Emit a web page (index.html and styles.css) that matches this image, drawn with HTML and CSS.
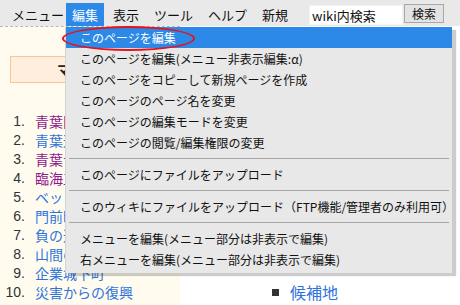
FILE: index.html
```html
<!DOCTYPE html>
<html lang="ja">
<head>
  <meta charset="UTF-8" />
  <title>編集メニュー</title>
  <link rel="stylesheet" href="styles.css">
</head>
<body>

<div class="menubar">
  <span class="menu-item first">メニュー</span>
  <span class="menu-item active">編集</span>
  <span class="menu-item">表示</span>
  <span class="menu-item">ツール</span>
  <span class="menu-item">ヘルプ</span>
  <span class="menu-item">新規</span>
  <form class="search" onsubmit="return false;">
    <input type="text" class="search-box" value="wiki内検索" />
    <button type="submit" class="search-btn">検索</button>
  </form>
</div>

<div class="page">
  <div class="side">
    <div class="side-title">マップ一覧</div>
    <ol class="ranking">
      <li><a class="visited">青葉区の街並み</a></li>
      <li><a>青葉通り</a></li>
      <li><a class="visited">青葉台</a></li>
      <li><a class="visited">臨海工業地帯</a></li>
      <li><a>ベッドタウン</a></li>
      <li><a>門前町</a></li>
      <li><a>負の遺産</a></li>
      <li><a>山間の集落</a></li>
      <li><a>企業城下町</a></li>
      <li><a>災害からの復興</a></li>
    </ol>
  </div>
  <div class="content">
    <ul class="sub-list">
      <li><a>候補地</a></li>
    </ul>
  </div>
</div>

<div class="dropdown">
  <div class="dd-item current">このページを編集</div>
  <div class="dd-item">このページを編集(メニュー非表示編集:α)</div>
  <div class="dd-item">このページをコピーして新規ページを作成</div>
  <div class="dd-item">このページのページ名を変更</div>
  <div class="dd-item">このページの編集モードを変更</div>
  <div class="dd-item">このページの閲覧/編集権限の変更</div>
  <div class="dd-sep"></div>
  <div class="dd-item">このページにファイルをアップロード</div>
  <div class="dd-sep"></div>
  <div class="dd-item">このウィキにファイルをアップロード（FTP機能/管理者のみ利用可）</div>
  <div class="dd-sep"></div>
  <div class="dd-item">メニューを編集(メニュー部分は非表示で編集)</div>
  <div class="dd-item">右メニューを編集(メニュー部分は非表示で編集)</div>
</div>

<div class="ring"></div>

</body>
</html>
```

FILE: styles.css
```css
body {
  margin: 0;
  width: 460px;
  height: 305px;
  overflow: hidden;
  position: relative;
  font-family: "Noto Sans CJK JP", sans-serif;
  background: #fff;
  color: #111;
}
.menubar {
  display: flex;
  align-items: flex-start;
  height: 26px;
  padding-left: 6px;
  background: #e9e9e9;
  font-size: 13px;
}
.menu-item {
  margin-top: 3px;
  margin-right: 3px;
  padding: 0 6px;
  height: 23px;
  line-height: 23px;
  white-space: nowrap;
}
.menu-item.first {
  margin-right: 0;
  padding-right: 2px;
}
.menu-item.active {
  background: #2d89e8;
  color: #fff;
}
.search {
  display: flex;
  align-items: flex-start;
  margin: 5px 0 0 12px;
}
.search-box {
  width: 94px;
  height: 20px;
  box-sizing: border-box;
  border: 1px solid #f4f4f4;
  padding: 0 2px;
  background: #fff;
  font-family: "Noto Sans CJK JP", sans-serif;
  font-size: 13px;
  color: #111;
  outline: none;
}
.search-btn {
  width: 40px;
  height: 19px;
  margin: -1px 0 0 1px;
  padding: 0;
  box-sizing: border-box;
  border: 1px solid #a9a9a9;
  background: #e3e3e3;
  font-family: "Noto Sans CJK JP", sans-serif;
  font-size: 12px;
  line-height: 16px;
  color: #111;
}
.page {
  display: flex;
  height: 279px;
}
.side {
  width: 180px;
  box-sizing: border-box;
  padding: 29px 0 0 10px;
  background: #fffcef;
  border-top: 1px dashed #b8b8b8;
}
.side-title {
  width: 160px;
  height: 27px;
  box-sizing: border-box;
  padding-left: 46px;
  background: #ffeedd;
  border: 1px solid #f9c78e;
  font-size: 14px;
  font-weight: bold;
  line-height: 25px;
  color: #222;
}
.ranking {
  list-style: none;
  margin: 29px 0 0 -10px;
  padding: 0;
  counter-reset: rank;
  font-size: 14px;
}
.ranking li {
  counter-increment: rank;
  display: flex;
  height: 19px;
  line-height: 19px;
  white-space: nowrap;
}
.ranking li::before {
  content: counter(rank) ".";
  width: 25px;
  margin-right: 10px;
  text-align: right;
  font-family: "Liberation Sans", sans-serif;
  color: #333;
}
.ranking a,
.sub-list a {
  color: #2f74dc;
}
.ranking a.visited {
  color: #8e1a8e;
}
.content {
  flex: 1;
  padding: 256px 0 0 92px;
}
.sub-list {
  list-style: none;
  margin: 0;
  padding: 0;
  font-size: 16px;
}
.sub-list li {
  display: flex;
  align-items: center;
  height: 20px;
}
.sub-list li::before {
  content: "";
  width: 7px;
  height: 7px;
  margin-right: 11px;
  background: #333;
}
.dropdown {
  position: absolute;
  left: 65px;
  top: 27px;
  width: 386px;
  padding-bottom: 3px;
  background: #e8e8e8;
  border-left: 1px solid #d4d4d4;
  box-shadow: 4px 3px 1px rgba(0,0,0,0.2);
  font-size: 12px;
}
.dd-item {
  height: 21px;
  line-height: 21px;
  padding-left: 14px;
  white-space: nowrap;
  color: #111;
}
.dd-item.current {
  background: #2d89e8;
  color: #fff;
}
.dd-sep {
  height: 1px;
  margin: 5px 3px;
  background: #a6a6a6;
}
.ring {
  position: absolute;
  left: 62px;
  top: 26px;
  width: 133px;
  height: 25px;
  box-sizing: border-box;
  border: 2.5px solid #e5121b;
  border-radius: 50%;
}
```
